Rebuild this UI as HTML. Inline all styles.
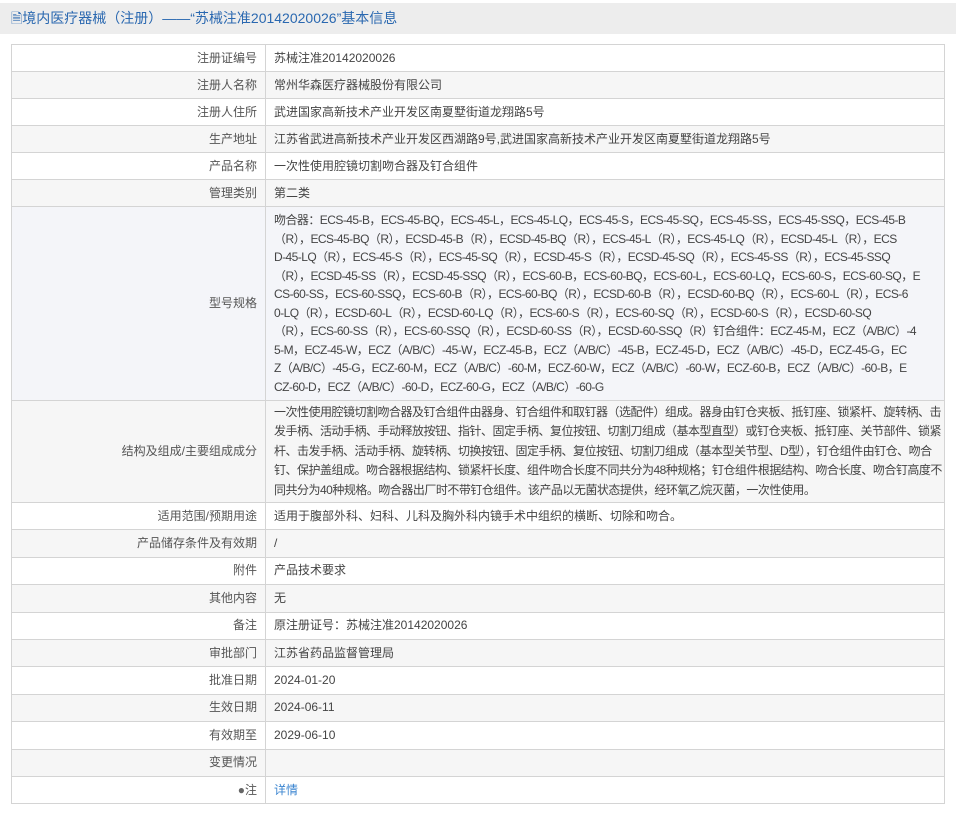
<!DOCTYPE html>
<html><head><meta charset="utf-8"><style>
body{margin:0;background:#fff;font-family:"Liberation Sans","Noto Sans CJK SC",sans-serif;font-size:12px;color:#444;width:956px;height:814px;overflow:hidden}
.hd{position:absolute;left:0;top:3px;width:956px;height:31px;background:#ededed;color:#2a68b0;font-size:14px;line-height:31px;padding-left:11px;box-sizing:border-box;white-space:nowrap}
table{position:absolute;left:11px;top:44px;width:934px;border-collapse:collapse;table-layout:fixed}
td{border:1px solid #d4d4d4;height:26px;padding:0 8px;line-height:21px;vertical-align:middle;overflow:hidden}
tr.b td{height:26.4px}
td.l{text-align:right;color:#555}
tr:nth-child(even) td{background:#f6f6f6}
tr.hv td{background:#f4f5f9}
.ln{white-space:nowrap;line-height:18.5px;letter-spacing:-0.55px}
.st .ln{line-height:19.6px;letter-spacing:-0.5px}
a{color:#3a84d0;text-decoration:none}
</style></head><body>
<div class="hd">🗎境内医疗器械（注册）——“苏械注准20142020026”基本信息</div>
<table>
<colgroup><col style="width:254px"><col></colgroup>
<tr><td class="l">注册证编号</td><td>苏械注准20142020026</td></tr>
<tr><td class="l">注册人名称</td><td>常州华森医疗器械股份有限公司</td></tr>
<tr><td class="l">注册人住所</td><td>武进国家高新技术产业开发区南夏墅街道龙翔路5号</td></tr>
<tr><td class="l">生产地址</td><td>江苏省武进高新技术产业开发区西湖路9号,武进国家高新技术产业开发区南夏墅街道龙翔路5号</td></tr>
<tr><td class="l">产品名称</td><td>一次性使用腔镜切割吻合器及钉合组件</td></tr>
<tr><td class="l">管理类别</td><td>第二类</td></tr>
<tr class="hv"><td class="l" style="height:193px">型号规格</td><td>
<div class="ln">吻合器：ECS-45-B，ECS-45-BQ，ECS-45-L，ECS-45-LQ，ECS-45-S，ECS-45-SQ，ECS-45-SS，ECS-45-SSQ，ECS-45-B</div>
<div class="ln">（R），ECS-45-BQ（R），ECSD-45-B（R），ECSD-45-BQ（R），ECS-45-L（R），ECS-45-LQ（R），ECSD-45-L（R），ECS</div>
<div class="ln">D-45-LQ（R），ECS-45-S（R），ECS-45-SQ（R），ECSD-45-S（R），ECSD-45-SQ（R），ECS-45-SS（R），ECS-45-SSQ</div>
<div class="ln">（R），ECSD-45-SS（R），ECSD-45-SSQ（R），ECS-60-B，ECS-60-BQ，ECS-60-L，ECS-60-LQ，ECS-60-S，ECS-60-SQ，E</div>
<div class="ln">CS-60-SS，ECS-60-SSQ，ECS-60-B（R），ECS-60-BQ（R），ECSD-60-B（R），ECSD-60-BQ（R），ECS-60-L（R），ECS-6</div>
<div class="ln">0-LQ（R），ECSD-60-L（R），ECSD-60-LQ（R），ECS-60-S（R），ECS-60-SQ（R），ECSD-60-S（R），ECSD-60-SQ</div>
<div class="ln">（R），ECS-60-SS（R），ECS-60-SSQ（R），ECSD-60-SS（R），ECSD-60-SSQ（R）钉合组件：ECZ-45-M，ECZ（A/B/C）-4</div>
<div class="ln">5-M，ECZ-45-W，ECZ（A/B/C）-45-W，ECZ-45-B，ECZ（A/B/C）-45-B，ECZ-45-D，ECZ（A/B/C）-45-D，ECZ-45-G，EC</div>
<div class="ln">Z（A/B/C）-45-G，ECZ-60-M，ECZ（A/B/C）-60-M，ECZ-60-W，ECZ（A/B/C）-60-W，ECZ-60-B，ECZ（A/B/C）-60-B，E</div>
<div class="ln">CZ-60-D，ECZ（A/B/C）-60-D，ECZ-60-G，ECZ（A/B/C）-60-G</div>
</td></tr>
<tr class="st"><td class="l" style="height:101px">结构及组成/主要组成成分</td><td>
<div class="ln">一次性使用腔镜切割吻合器及钉合组件由器身、钉合组件和取钉器（选配件）组成。器身由钉仓夹板、抵钉座、锁紧杆、旋转柄、击</div>
<div class="ln">发手柄、活动手柄、手动释放按钮、指针、固定手柄、复位按钮、切割刀组成（基本型直型）或钉仓夹板、抵钉座、关节部件、锁紧</div>
<div class="ln">杆、击发手柄、活动手柄、旋转柄、切换按钮、固定手柄、复位按钮、切割刀组成（基本型关节型、D型），钉仓组件由钉仓、吻合</div>
<div class="ln">钉、保护盖组成。吻合器根据结构、锁紧杆长度、组件吻合长度不同共分为48种规格；钉仓组件根据结构、吻合长度、吻合钉高度不</div>
<div class="ln">同共分为40种规格。吻合器出厂时不带钉仓组件。该产品以无菌状态提供，经环氧乙烷灭菌，一次性使用。</div>
</td></tr>
<tr class="b"><td class="l">适用范围/预期用途</td><td>适用于腹部外科、妇科、儿科及胸外科内镜手术中组织的横断、切除和吻合。</td></tr>
<tr class="b"><td class="l">产品储存条件及有效期</td><td>/</td></tr>
<tr class="b"><td class="l">附件</td><td>产品技术要求</td></tr>
<tr class="b"><td class="l">其他内容</td><td>无</td></tr>
<tr class="b"><td class="l">备注</td><td>原注册证号：苏械注准20142020026</td></tr>
<tr class="b"><td class="l">审批部门</td><td>江苏省药品监督管理局</td></tr>
<tr class="b"><td class="l">批准日期</td><td>2024-01-20</td></tr>
<tr class="b"><td class="l">生效日期</td><td>2024-06-11</td></tr>
<tr class="b"><td class="l">有效期至</td><td>2029-06-10</td></tr>
<tr class="b"><td class="l">变更情况</td><td></td></tr>
<tr class="b"><td class="l"><span style="color:#666">●</span>注</td><td><a>详情</a></td></tr>
</table>
</body></html>
